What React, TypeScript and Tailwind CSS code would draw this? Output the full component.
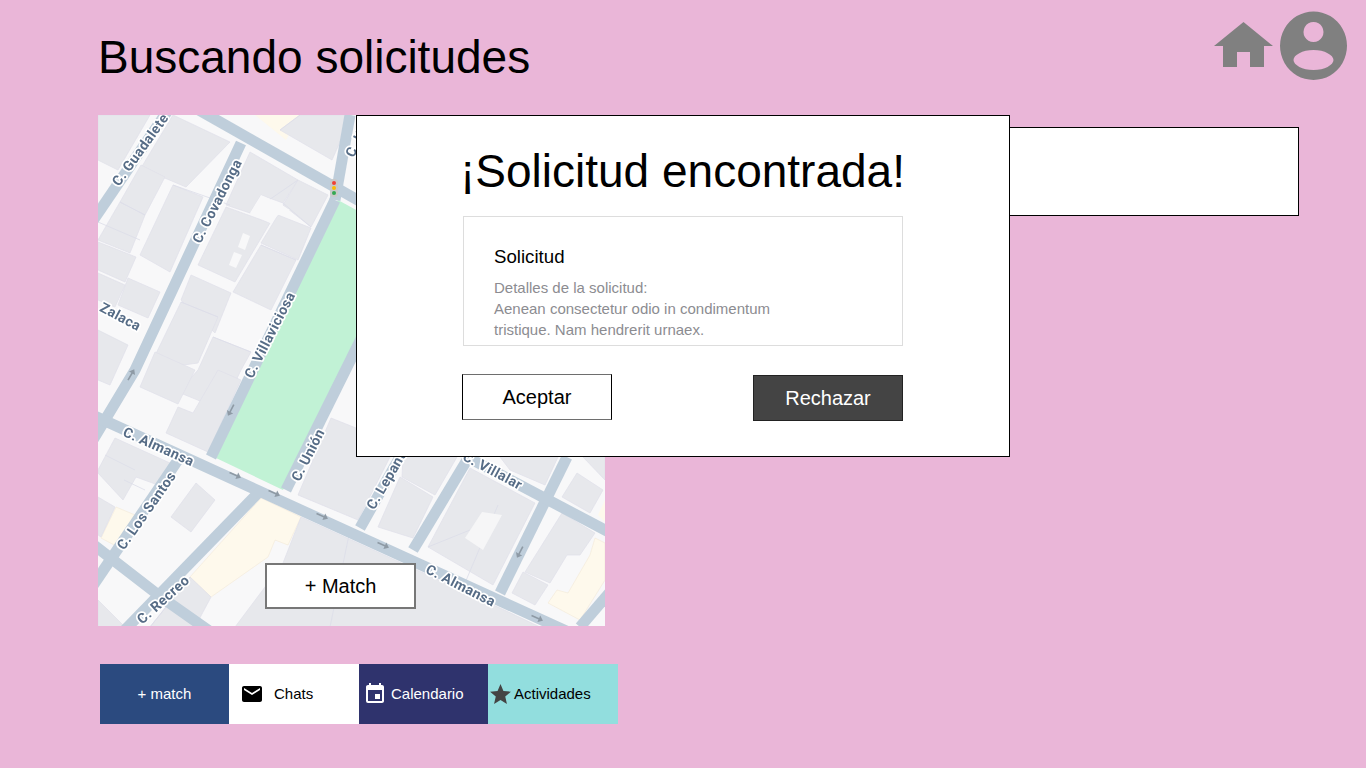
import { MdEmail, MdEvent, MdStar } from "react-icons/md";

const blocks = [
  "173,115 230,142 186,187 141,168", "173,185 203,197 170,272 140,255", "120,202 145,215 130,253 98,240", "141,165 165,177 145,215 120,202",
  "98,242 136,257 125,282 98,270", "128,278 160,292 148,318 118,305", "98,273 125,285 115,307 98,300", "250,152 298,180 283,203 261,195 250,213 226,205",
  "298,180 328,195 311,227 283,205", "226,207 270,223 235,282 198,265", "278,215 311,228 298,260 261,243", "261,245 296,260 271,310 233,292",
  "191,275 231,293 215,333 181,300", "181,302 218,317 198,363 148,370 165,335", "213,337 251,352 241,370 222,410 178,392 198,370",
  "166,433 178,407 193,413 218,370 241,380 208,452", "140,387 155,352 195,370 178,404", "115,438 170,463 158,485 136,477 123,500 98,473 98,470",
  "98,497 115,507 101,537 98,535", "196,483 215,500 191,532 171,517", "301,517 500,608 540,627 235,627 283,563",
  "298,495 331,418 356,428 356,457 390,457 358,520", "378,527 400,477 433,497 413,538", "403,457 457,457 435,495 402,477",
  "470,468 535,503 493,585 428,547", "500,457 558,457 545,485 510,470", "562,513 595,533 580,555 567,555 550,583 525,572",
  "523,572 548,585 535,605 512,593", "577,473 603,490 590,513 562,497", "583,457 605,457 605,480", "98,115 150,115 118,170 98,160", "98,330 128,345 110,385 98,380",
  "300,115 352,115 332,160 280,130", "190,577 211,597 195,627 150,627", "98,600 125,627 98,627",
];
const lines = [
  "173,185 230,205", "120,202 145,215", "250,213 298,180", "261,245 296,260", "181,302 218,317", "213,337 251,352", "98,222 140,240", "283,203 311,227",
  "498,505 462,590", "428,547 470,530", "350,530 330,627", "190,577 150,627", "300,115 280,130", "124,480 145,490", "105,455 135,470",
];
const roads = [
  "175,100 90,225", "241,143 135,370 90,445", "190,105 640,360", "335,200 211,457", "90,414 575,635", "420,220 286,490", "400,457 360,528", "467,460 413,550",
  "567,457 500,593", "261,490 120,635", "178,460 90,590", "90,542 161,597 215,635", "467,457 620,538", "350,115 335,200", "580,627 610,592",
];
const labels = [
  { t: "C. Guadalete", x: 115, y: 184, r: -54 }, { t: "C. Covadonga", x: 196, y: 242, r: -63 }, { t: "Zalaca", x: 101, y: 306, r: 28 },
  { t: "C. Villaviciosa", x: 248, y: 377, r: -63 }, { t: "C. Almansa", x: 124, y: 431, r: 24 }, { t: "C. Los Santos", x: 120, y: 548, r: -55 },
  { t: "C. Recreo", x: 139, y: 621, r: -42 }, { t: "C. Unión", x: 295, y: 480, r: -63 }, { t: "C. Lepanto", x: 370, y: 508, r: -60 },
  { t: "C. Villalar", x: 464, y: 455, r: 28 }, { t: "C. Almansa", x: 427, y: 568, r: 27 }, { t: "C. Unión", x: 349, y: 156, r: -63 },
];
const arrows = [
  { x: 131, y: 375, r: -60 }, { x: 231, y: 410, r: 118 }, { x: 235, y: 475, r: 24 }, { x: 274, y: 493, r: 24 }, { x: 322, y: 516, r: 24 },
  { x: 383, y: 545, r: 24 }, { x: 520, y: 552, r: 118 }, { x: 537, y: 618, r: 24 },
];

function MapArt() {
  return (
    <svg viewBox="98 115 507 511" width="507" height="511" className="block blur-[0.3px]">
      <rect x="98" y="115" width="507" height="511" fill="#f8f8f9" />
      <polygon points="255,115 300,115 286,140" fill="#fef9ec" />
      <polygon points="98,115 110,115 98,135" fill="#fef9ec" />
      <polygon points="261,498 301,517 288,545 275,540 268,557 211,597 190,577" fill="#fef9ec" stroke="#f3ead6" strokeWidth="0.6" />
      <polygon points="116,507 135,515 118,547 101,538" fill="#fef9ec" stroke="#f3ead6" strokeWidth="0.6" />
      <polygon points="595,538 605,543 605,580 580,620 548,603 557,590 568,593 590,555" fill="#fef9ec" stroke="#f3ead6" strokeWidth="0.6" />
      <polygon points="598,515 605,500 605,522" fill="#fef9ec" />
      {blocks.map((p, i) => <polygon key={i} points={p} fill="#e7e8ec" stroke="#dfe0ea" strokeWidth="0.7" />)}
      {lines.map((p, i) => <polyline key={i} points={p} fill="none" stroke="#dcdde8" strokeWidth="0.8" />)}
      <polygon points="261,195 278,203 290,210 278,215 270,223 250,213" fill="#f8f8f9" />
      <polygon points="243,233 250,236 245,250 238,247" fill="#f8f8f9" />
      <polygon points="234,252 242,255 236,268 229,265" fill="#f8f8f9" />
      <polygon points="482,512 502,515 483,550 465,538" fill="#f6f6f7" />
      <polygon points="338,200 420,245 283,490 216,458" fill="#c1f2d5" />
      {roads.map((p, i) => <polyline key={i} points={p} fill="none" stroke="#bfcedb" strokeWidth="11" strokeLinejoin="round" />)}
      {arrows.map((a, i) => (
        <g key={i} transform={`translate(${a.x} ${a.y}) rotate(${a.r})`}>
          <path d="M-6 -0.8H2V-3.5L6.5 0L2 3.5V0.8H-6Z" fill="#8e9aa5" />
        </g>
      ))}
      {labels.map((l, i) => (
        <text key={i} transform={`translate(${l.x} ${l.y}) rotate(${l.r})`} dominantBaseline="central" fontFamily="Roboto, sans-serif" fontWeight="700" fontSize="14" fill="#566c86" stroke="#ffffff" strokeWidth="3.4" paintOrder="stroke" strokeLinejoin="round" letterSpacing="0.4">{l.t}</text>
      ))}
      <rect x="330" y="179" width="8" height="18" rx="3.5" fill="#c9c9c9" />
      <circle cx="334" cy="183" r="2" fill="#ef4136" />
      <circle cx="334" cy="188" r="2" fill="#fbbc05" />
      <circle cx="334" cy="193" r="2" fill="#34a853" />
    </svg>
  );
}

function HomeIcon() {
  return (
    <svg width="60" height="48" viewBox="0 0 60 48" className="block">
      <path d="M29.5 1L59 25H50V46H36V31H23V46H9V25H0Z" fill="#808080" />
    </svg>
  );
}

function ProfileIcon() {
  return (
    <svg width="68" height="69" viewBox="0 0 68 69" className="block">
      <path fillRule="evenodd" fill="#808080" d="M33.5 0.5a33.5 34.25 0 1 0 0.01 0ZM33.5 11a10 10 0 1 1 -0.01 0ZM33.5 39c11 0 20 5 20 10s-9 10-20 10-20-5-20-10 9-10 20-10Z" />
    </svg>
  );
}

export default function App() {
  const font = { fontFamily: '"Liberation Sans", Arial, sans-serif' };
  return (
    <div style={font} className="relative w-[1366px] h-[768px] overflow-hidden bg-[#eab6d8] text-black">
      <header className="flex h-[115px] items-start justify-between pl-[98px] pr-[18px]">
        <h1 className="mt-[30px] text-[46px] leading-[54px]">Buscando solicitudes</h1>
        <div className="mt-[11px] flex items-start gap-[6px]">
          <div className="mt-[10px]"><HomeIcon /></div>
          <ProfileIcon />
        </div>
      </header>

      <main className="flex pl-[98px]">
        <div className="relative h-[511px] w-[507px] shrink-0">
          <MapArt />
          <button className="absolute left-[167px] top-[448px] flex h-[46px] w-[151px] items-center justify-center border-2 border-[#777777] bg-white text-[20px]">+ Match</button>
        </div>
        <div className="ml-[30px] mt-[12px] h-[89px] w-[664px] border border-black bg-white" />
      </main>

      <nav className="ml-[100px] mt-[38px] flex h-[60px] w-[518px] text-[15px]">
        <div className="flex w-[129px] items-center justify-center bg-[#2b4a7f] pt-[1px] text-white">+ match</div>
        <div className="flex w-[130px] items-center bg-white pl-[11px]">
          <MdEmail size={24} />
          <span className="ml-[10px] pt-[1px]">Chats</span>
        </div>
        <div className="flex w-[129px] items-center bg-[#2f336d] pl-[4px] text-white">
          <MdEvent size={24} />
          <span className="ml-[4px] pt-[1px]">Calendario</span>
        </div>
        <div className="flex w-[130px] items-center bg-[#92dede]">
          <MdStar size={25} color="#444444" />
          <span className="ml-[1px] pt-[1px]">Actividades</span>
        </div>
      </nav>

      <section className="absolute left-[356px] top-[115px] flex h-[342px] w-[654px] flex-col border border-black bg-white pl-[106px]">
        <h2 className="-ml-[3px] mt-[28px] h-[56px] text-[46px] leading-[54px]">¡Solicitud encontrada!</h2>
        <div className="mt-[16px] h-[130px] w-[440px] border border-[#dddddd] pl-[30px] pt-[29px]">
          <h3 className="text-[18.67px] leading-[22px]">Solicitud</h3>
          <p className="mt-[9px] w-[300px] text-[15px] leading-[21px] text-[#8c8c91]">Detalles de la solicitud:<br />Aenean consectetur odio in condimentum<br />tristique. Nam hendrerit urnaex.</p>
        </div>
        <div className="-ml-[1px] mt-[28px] flex w-[441px] items-start justify-between">
          <button className="flex h-[46px] w-[150px] items-center justify-center border border-black border-y-[#6e6e6e] bg-white text-[20px]">Aceptar</button>
          <button className="mt-[1px] flex h-[46px] w-[150px] items-center justify-center border border-[#222222] bg-[#444444] text-[20px] text-white">Rechazar</button>
        </div>
      </section>
    </div>
  );
}
